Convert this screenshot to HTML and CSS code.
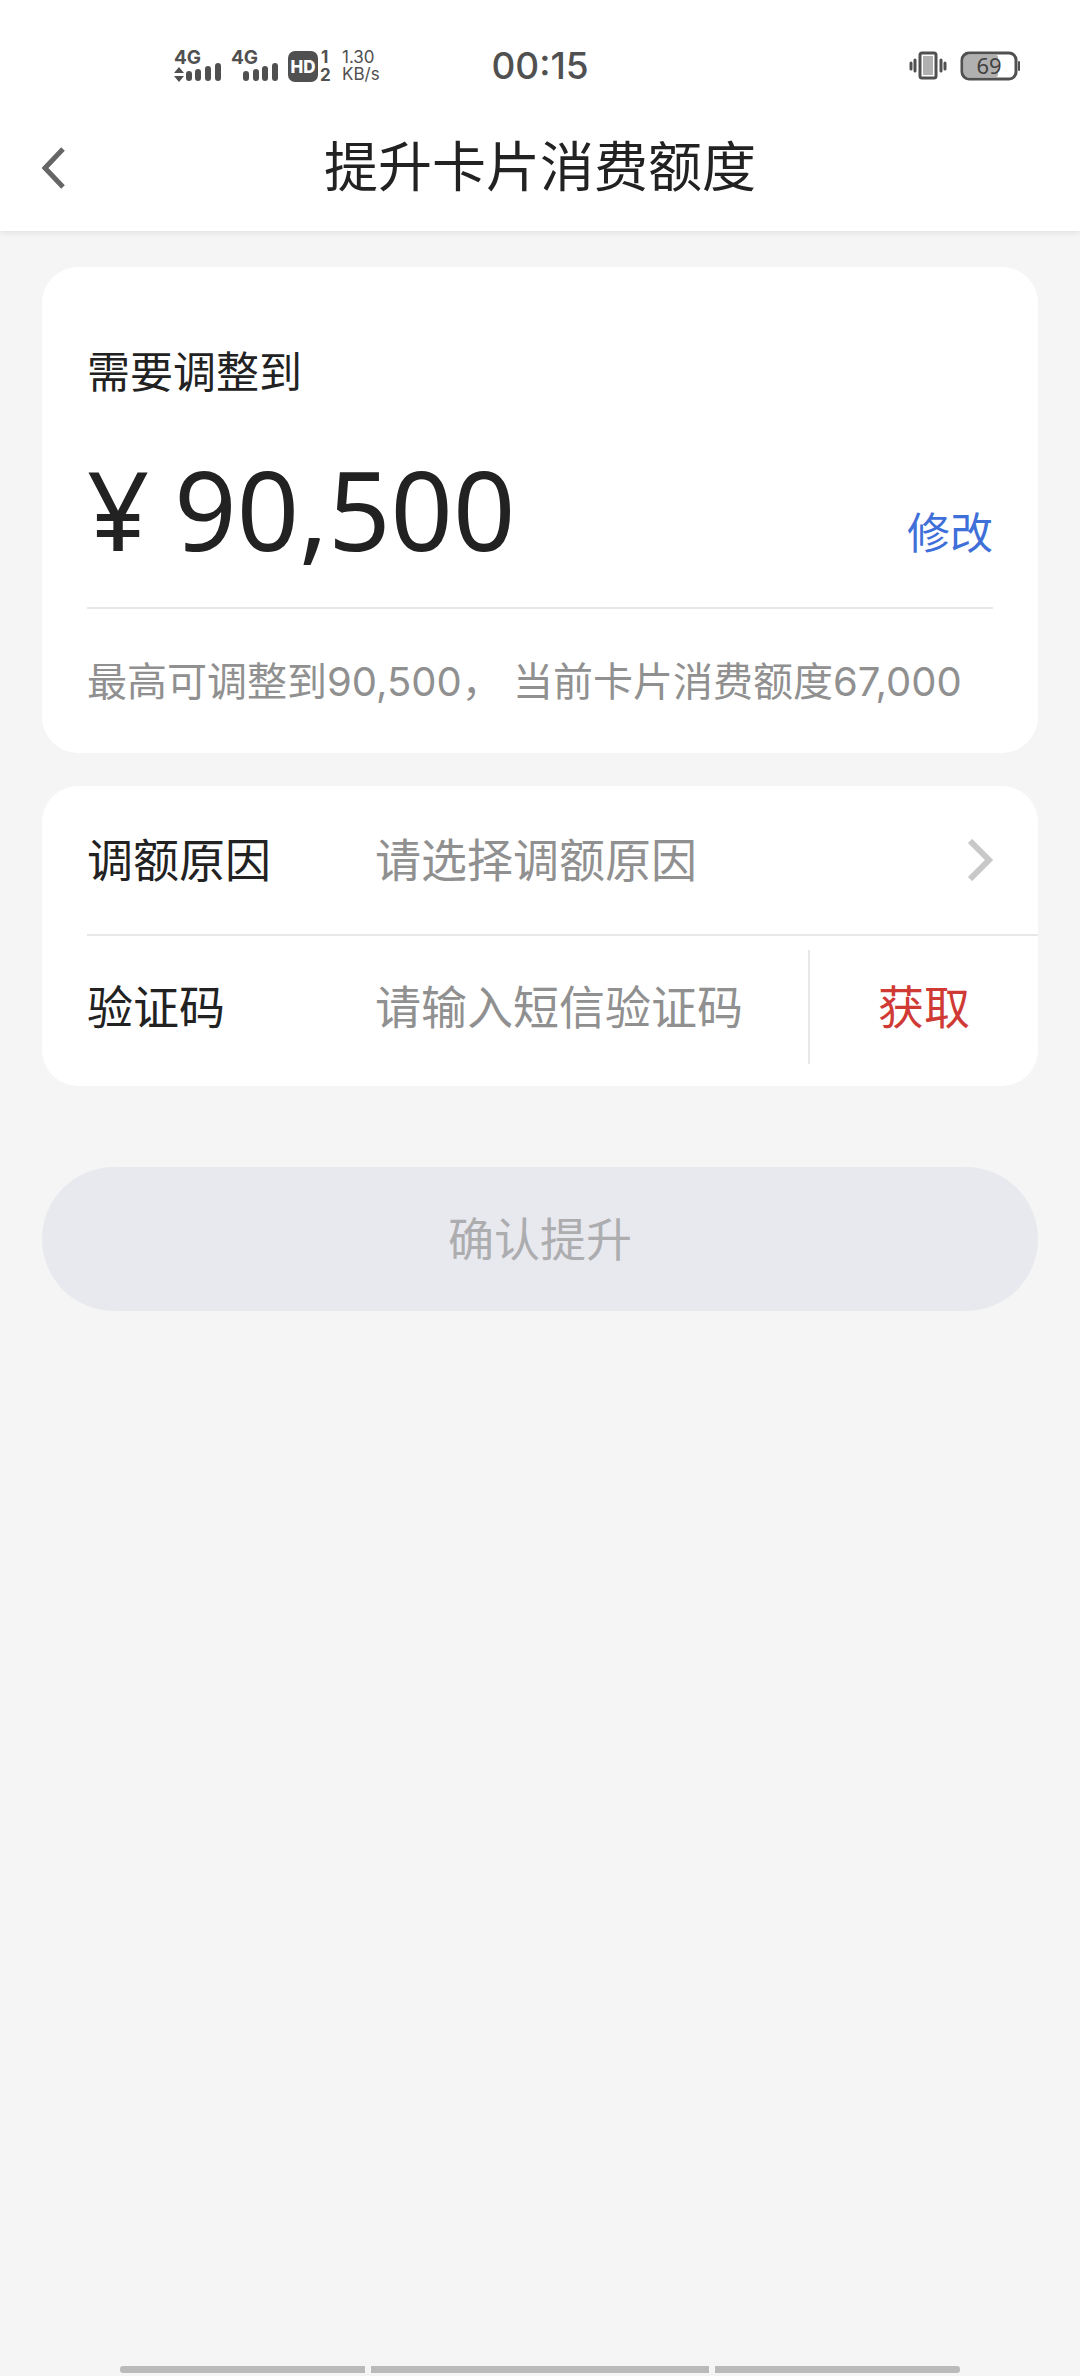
FILE: index.html
```html
<!DOCTYPE html>
<html lang="zh-CN">
<head>
<meta charset="utf-8">
<meta name="viewport" content="width=device-width, initial-scale=1">
<title>提升卡片消费额度</title>
<link rel="stylesheet" href="styles.css">
</head>
<body>
<header class="top">
  <div class="status">
    <div class="status-left">
      <svg class="signals" width="162" height="48" viewBox="0 -6 162 48" role="img" aria-label="信号">
        <g class="ink">
          <text class="net" x="0" y="16">4G</text>
          <path d="M5 19l5 6H0zM5 34l5-6H0z"/>
          <rect x="12" y="23" width="6" height="10" rx="3"/>
          <rect x="21" y="21" width="6" height="12" rx="3"/>
          <rect x="31" y="18" width="6" height="15" rx="3"/>
          <rect x="41" y="15" width="6" height="18" rx="3"/>
          <text class="net" x="57" y="16">4G</text>
          <rect x="69" y="23" width="6" height="10" rx="3"/>
          <rect x="79" y="21" width="6" height="12" rx="3"/>
          <rect x="88" y="18" width="6" height="15" rx="3"/>
          <rect x="98" y="15" width="6" height="18" rx="3"/>
          <rect x="114" y="3" width="30" height="31" rx="7"/>
          <text class="sim" x="147" y="15">1</text>
          <text class="sim" x="146" y="33">2</text>
        </g>
        <text class="hd" x="129" y="25" text-anchor="middle">HD</text>
      </svg>
      <div class="speed"><span>1.30</span><span>KB/s</span></div>
    </div>
    <time class="clock">00:15</time>
    <div class="status-right">
      <svg width="38" height="30" viewBox="0 0 38 30" aria-hidden="true">
        <rect x="11" y="2" width="16" height="25" rx="2" fill="none" stroke="#505050" stroke-width="3"/>
        <rect x="14" y="5" width="10" height="19" fill="#b0b0b0"/>
        <path d="M6 9v11M32 9v11M2 12v6M36 12v6" stroke="#505050" stroke-width="3" stroke-linecap="round"/>
      </svg>
      <svg width="61" height="30" viewBox="0 0 61 30" role="img" aria-label="电量 69">
        <rect x="4" y="4" width="34" height="22" rx="2" fill="#b0b0b0"/>
        <rect x="2" y="2" width="54" height="26" rx="7" fill="none" stroke="#505050" stroke-width="3"/>
        <path d="M59 11v8" stroke="#505050" stroke-width="2" stroke-linecap="round"/>
        <text class="level" x="29" y="23" text-anchor="middle">69</text>
      </svg>
    </div>
  </div>
  <nav class="nav">
    <button class="back" type="button" aria-label="返回">
      <svg width="24" height="42" viewBox="0 0 24 42" aria-hidden="true"><path d="M21 2L3 21l18 19" fill="none" stroke="#666" stroke-width="5"/></svg>
    </button>
    <h1 class="title">提升卡片消费额度</h1>
  </nav>
</header>

<main class="content">
  <section class="card">
    <h2 class="label">需要调整到</h2>
    <div class="amount-row">
      <p class="amount"><span class="yen">¥</span>90,500</p>
      <a class="edit" href="#">修改</a>
    </div>
    <p class="hint">最高可调整到90,500， 当前卡片消费额度67,000</p>
  </section>

  <form class="form">
    <div class="fields">
      <div class="field">
        <label for="reason">调额原因</label>
        <select id="reason"><option>请选择调额原因</option></select>
        <svg width="26" height="42" viewBox="0 0 26 42" aria-hidden="true"><path d="M3 2l19 19L3 40" fill="none" stroke="#c8c8c8" stroke-width="6"/></svg>
      </div>
      <div class="field field-code">
        <label for="code">验证码</label>
        <input id="code" type="text" placeholder="请输入短信验证码">
        <button class="get" type="button">获取</button>
      </div>
    </div>
    <button class="submit" type="submit" disabled>确认提升</button>
  </form>
</main>

<footer class="gestures"><i></i><i class="wide"></i><i></i></footer>
</body>
</html>
```
FILE: styles.css
```css
* {
  box-sizing: border-box;
}

body {
  display: flex;
  flex-direction: column;
  min-height: 100vh;
  margin: 0;
  background: #f5f5f5;
  color: #222;
  font-family: Inter, "Noto Sans CJK SC", sans-serif;
}

h1, h2, p {
  margin: 0;
  font-weight: 400;
}

button, input, select {
  margin: 0;
  padding: 0;
  border: 0;
  background: none;
  color: inherit;
  font: inherit;
}

svg {
  display: block;
  flex: none;
}

/* Header */
.top {
  background: #fff;
  box-shadow: 0 2px 6px rgba(0, 0, 0, 0.08);
}

.status {
  display: grid;
  grid-template-columns: 1fr auto 1fr;
  align-items: center;
  height: 104px;
  padding-top: 28px;
  color: #505050;
}

.status-left {
  display: flex;
  align-items: center;
  gap: 6px;
  padding-left: 174px;
}

.signals .ink {
  fill: #505050;
}

.net {
  font-size: 19px;
  font-weight: 700;
}

.sim {
  font-size: 17px;
  font-weight: 700;
}

.hd {
  fill: #fff;
  font-size: 17px;
  font-weight: 800;
}

.speed {
  display: flex;
  flex-direction: column;
  font-family: Inter, sans-serif;
  font-size: 17px;
  line-height: 17px;
}

.clock {
  font-size: 37px;
  font-weight: 500;
  line-height: 44px;
}

.status-right {
  display: flex;
  justify-content: flex-end;
  gap: 13px;
  padding-right: 59px;
}

.level {
  fill: #404040;
  font-family: "Noto Sans", sans-serif;
  font-size: 22px;
}

.nav {
  display: grid;
  grid-template-columns: 1fr auto 1fr;
  align-items: center;
  height: 127px;
  padding: 0 42px;
}

.back {
  justify-self: start;
}

.title {
  font-size: 54px;
  line-height: 76px;
}

/* Cards */
.content {
  padding: 36px 42px;
}

.card {
  padding: 75px 45px 41px;
  border-radius: 36px;
  background: #fff;
}

.label {
  font-size: 43px;
  line-height: 60px;
}

.amount-row {
  display: flex;
  align-items: flex-end;
  justify-content: space-between;
  margin: 47px 0 43px;
  padding-bottom: 38px;
  border-bottom: 2px solid #e8e8e8;
}

.amount {
  font-family: "Noto Sans", sans-serif;
  font-size: 109px;
  line-height: 120px;
}

.yen {
  margin-right: 25px;
}

.edit {
  color: #3f6fd8;
  font-size: 43px;
  line-height: 72px;
  text-decoration: none;
}

.hint {
  color: #909090;
  font-size: 40px;
  line-height: 60px;
}

.form {
  margin-top: 33px;
  font-size: 46px;
  line-height: 60px;
}

.fields {
  border-radius: 36px;
  background: #fff;
}

.field {
  display: flex;
  align-items: center;
  height: 150px;
  margin-left: 45px;
  padding-right: 45px;
}

.field:first-child {
  border-bottom: 2px solid #e8e8e8;
}

.field label {
  flex: none;
  width: 288px;
}

.field select,
.field input {
  flex: 1;
  min-width: 0;
  height: 72px;
  outline: 0;
}

.field select {
  appearance: none;
  color: #909090;
}

.field input::placeholder {
  color: #909090;
  opacity: 1;
}

.field-code {
  padding: 14px 0 22px;
}

.get {
  align-self: stretch;
  width: 230px;
  border-left: 2px solid #e8e8e8;
  color: #d03a35;
}

.submit {
  display: block;
  width: 100%;
  height: 144px;
  margin-top: 81px;
  border-radius: 72px;
  background: #e8e9ee;
  color: #adadb0;
}

/* Gesture bar */
.gestures {
  display: flex;
  gap: 6px;
  margin-top: auto;
  padding: 0 120px 3px;
}

.gestures i {
  flex: 245;
  height: 7px;
  background: #bababa;
}

.gestures .wide {
  flex: 338;
}

.gestures i:first-child {
  border-radius: 3px 0 0 3px;
}

.gestures i:last-child {
  border-radius: 0 3px 3px 0;
}
```
